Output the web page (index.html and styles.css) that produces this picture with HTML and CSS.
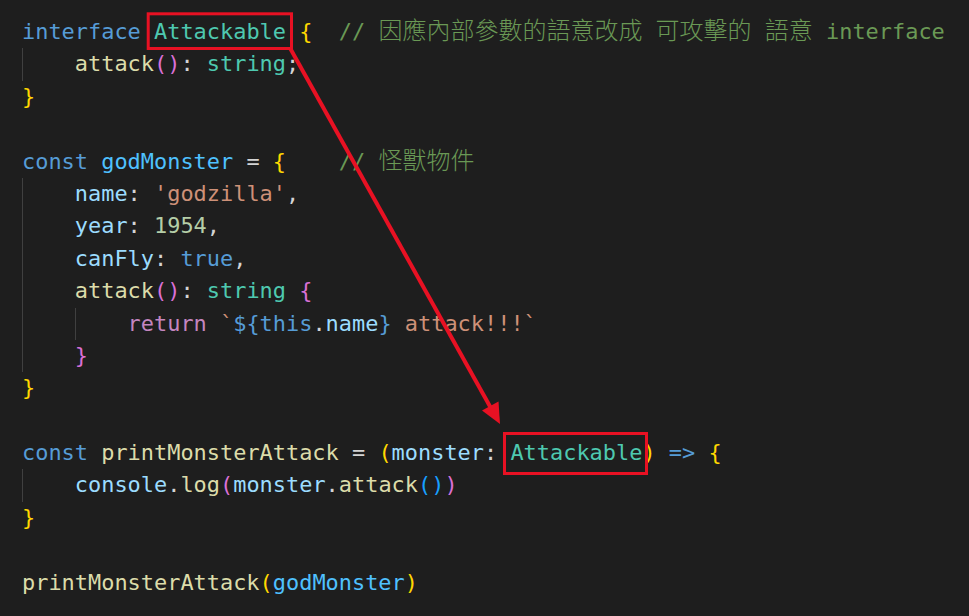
FILE: index.html
```html
<!DOCTYPE html>
<html lang="zh-Hant">
<head>
<meta charset="utf-8">
<title>Attackable</title>
<link rel="stylesheet" href="styles.css">
</head>
<body>
<div class="editor">
  <div class="code">
    <div class="ln"><span class="kw">interface</span> <span class="ty">Attackable</span> <span class="b1">{</span>  <span class="cm">// <span class="cjk">因應內部參數的語意改成</span> <span class="cjk">可攻擊的</span> <span class="cjk">語意</span> interface</span></div>
    <div class="block">
      <div class="ln"><span class="fn">attack</span><span class="b2">()</span><span class="op">: </span><span class="ty">string</span><span class="op">;</span></div>
    </div>
    <div class="ln"><span class="b1">}</span></div>
    <div class="ln"></div>
    <div class="ln"><span class="kw">const</span> <span class="cv">godMonster</span> <span class="op">=</span> <span class="b1">{</span>    <span class="cm">// <span class="cjk">怪獸物件</span></span></div>
    <div class="block">
      <div class="ln"><span class="vr">name</span><span class="op">: </span><span class="st">'godzilla'</span><span class="op">,</span></div>
      <div class="ln"><span class="vr">year</span><span class="op">: </span><span class="nu">1954</span><span class="op">,</span></div>
      <div class="ln"><span class="vr">canFly</span><span class="op">: </span><span class="kw">true</span><span class="op">,</span></div>
      <div class="ln"><span class="fn">attack</span><span class="b2">()</span><span class="op">: </span><span class="ty">string</span> <span class="b2">{</span></div>
      <div class="block">
        <div class="ln"><span class="ct">return</span> <span class="st">`</span><span class="kw">${this</span><span class="op">.</span><span class="vr">name</span><span class="kw">}</span><span class="st"> attack!!!`</span></div>
      </div>
      <div class="ln"><span class="b2">}</span></div>
    </div>
    <div class="ln"><span class="b1">}</span></div>
    <div class="ln"></div>
    <div class="ln"><span class="kw">const</span> <span class="fn">printMonsterAttack</span> <span class="op">=</span> <span class="b1">(</span><span class="vr">monster</span><span class="op">: </span><span class="ty">Attackable</span><span class="b1">)</span> <span class="kw">=&gt;</span> <span class="b1">{</span></div>
    <div class="block">
      <div class="ln"><span class="vr">console</span><span class="op">.</span><span class="fn">log</span><span class="b2">(</span><span class="vr">monster</span><span class="op">.</span><span class="fn">attack</span><span class="b3">()</span><span class="b2">)</span></div>
    </div>
    <div class="ln"><span class="b1">}</span></div>
    <div class="ln"></div>
    <div class="ln"><span class="fn">printMonsterAttack</span><span class="b1">(</span><span class="cv">godMonster</span><span class="b1">)</span></div>
  </div>
  <svg class="marks" width="969" height="616" viewBox="0 0 969 616" xmlns="http://www.w3.org/2000/svg">
    <rect x="148.2" y="13.8" width="143.3" height="34.7" fill="none" stroke="#e81123" stroke-width="3"/>
    <rect x="504.5" y="433.5" width="142" height="40" fill="none" stroke="#e81123" stroke-width="3"/>
    <line x1="290" y1="48" x2="492" y2="410" stroke="#e81123" stroke-width="4"/>
    <polygon points="500,424 482,410.5 498.5,401.5" fill="#e81123"/>
  </svg>
</div>
</body>
</html>
```

FILE: styles.css
```css
html, body {
  margin: 0;
  padding: 0;
  background: #1e1e1e;
}

.editor {
  position: relative;
  width: 969px;
  height: 616px;
  overflow: hidden;
  background: #1e1e1e;
}

.code {
  padding: 16px 0 0 22px;
  font-family: "DejaVu Sans Mono", "Liberation Mono", "Noto Sans CJK TC", monospace;
  font-size: 21.93px;
  color: #d4d4d4;
}

.ln {
  height: 32.4px;
  line-height: 32.4px;
  white-space: pre;
}

.block {
  border-left: 1px solid #404040;
  padding-left: 51.8px;
}

.cjk {
  font-family: "Noto Sans CJK TC", "Noto Sans CJK SC", sans-serif;
  font-size: 24px;
  font-weight: 300;
  line-height: 1;
}

.kw { color: #569cd6; }
.ty { color: #4ec9b0; }
.b1 { color: #ffd700; }
.b2 { color: #da70d6; }
.b3 { color: #179fff; }
.cm { color: #6a9955; }
.fn { color: #dcdcaa; }
.vr { color: #9cdcfe; }
.cv { color: #4fc1ff; }
.st { color: #ce9178; }
.nu { color: #b5cea8; }
.ct { color: #c586c0; }
.op { color: #d4d4d4; }

.marks {
  position: absolute;
  top: 0;
  left: 0;
  pointer-events: none;
}
```
